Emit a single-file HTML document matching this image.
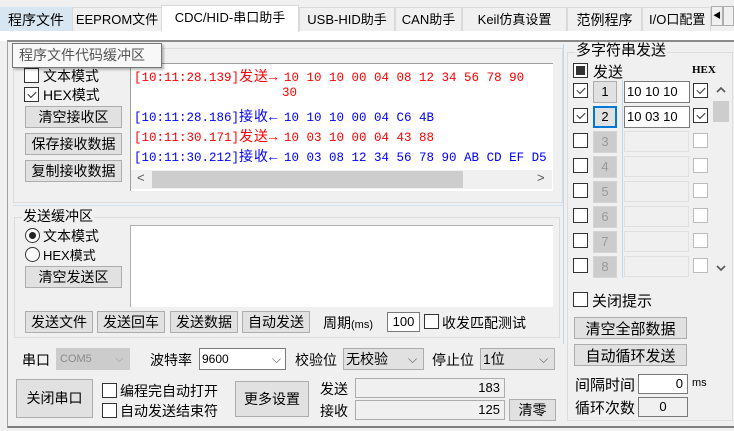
<!DOCTYPE html>
<html><head><meta charset="utf-8">
<style>
*{box-sizing:border-box;margin:0;padding:0}
body{width:734px;height:431px;background:#f0f0f0;font-family:"Liberation Sans","Noto Sans CJK SC",sans-serif;font-size:13px;color:#000;position:relative;overflow:hidden}
.a{position:absolute;white-space:nowrap}
.btn{position:absolute;background:#e1e1e1;border:1px solid #adadad;text-align:center;font-size:14px}
.cb{position:absolute;width:15px;height:15px;border:1px solid #333;background:#fff}
.cbd{position:absolute;width:15px;height:15px;border:1px solid #bcbcbc;background:#fff}
.grp{position:absolute;border:1px solid #dcdcdc}
.lg{position:absolute;background:#f0f0f0;padding:0 1px;font-size:14px;line-height:16px}
.tab{position:absolute;top:7px;height:24px;border:1px solid #d9d9d9;border-bottom:none;background:#f0f0f0;font-size:14px;line-height:24px;text-align:center}
.mono{font-family:"Liberation Mono","Noto Sans CJK SC",monospace;font-size:12.5px}
.cj{display:inline-block;width:45px;font-size:14px;letter-spacing:1px}
.r{color:#f00}.b{color:#00f}
.tb{position:absolute;background:#fff;border:1px solid #7a7a7a}
.chk::after{content:"";position:absolute;left:3px;top:3px;width:7px;height:4px;border-left:1.3px solid #333;border-bottom:1.3px solid #333;transform:rotate(-45deg)}
.nb{position:absolute;width:24px;height:22px;background:#cccccc;border:1px solid #d4d4d4;color:#9a9a9a;text-align:center;line-height:20px;font-size:13px}
.et{position:absolute;width:65px;height:21px;border:1px solid #e0e0e0;background:#f0f0f0}
</style></head><body>
<div style="position:absolute;left:0;top:31px;width:734px;height:10px;background:#fff"></div>
<div class="tab" style="left:0;width:72px;background:#d8e6f2;border-color:#d8e6f2">程序文件</div>
<div class="tab" style="left:72px;width:90px;font-size:13px">EEPROM文件</div>
<div class="tab" style="left:161px;width:138px;top:5px;height:27px;background:#fff;font-size:13px;border-color:#d9d9d9">CDC/HID-串口助手</div>
<div class="tab" style="left:299px;width:96px;font-size:13px">USB-HID助手</div>
<div class="tab" style="left:395px;width:67px;font-size:13px">CAN助手</div>
<div class="tab" style="left:462px;width:105px;font-size:13px">Keil仿真设置</div>
<div class="tab" style="left:567px;width:75px">范例程序</div>
<div class="tab" style="left:642px;width:69px;font-size:13px;text-align:left;padding-left:6px;overflow:hidden">I/O口配置</div>
<div class="a" style="left:711px;top:6px;width:12px;height:20px;background:#f0f0f0;border:1px solid #adadad;font-size:8px;line-height:18px;text-align:center">◀</div>
<div class="a" style="left:723px;top:6px;width:11px;height:20px;background:#f0f0f0;border:1px solid #adadad"></div>
<div class="a" style="left:7px;top:40px;width:727px;height:388px;border-top:2px solid #8a8a8a;border-left:1px solid #a0a0a0;border-bottom:2px solid #808080"></div>
<div class="grp" style="left:13px;top:48px;width:550px;height:155px"></div>
<div class="tb" style="left:130px;top:63px;width:423px;height:128px;border-color:#a0a0a0;border-right:none;border-bottom:none"></div>
<div class="a mono r" style="left:134px;top:66px">[10:11:28.139]<span class="cj">发送→</span>10 10 10 00 04 08 12 34 56 78 90</div>
<div class="a mono r" style="left:282px;top:86px">30</div>
<div class="a mono b" style="left:134px;top:106px">[10:11:28.186]<span class="cj">接收←</span>10 10 10 00 04 C6 4B</div>
<div class="a mono r" style="left:134px;top:126px">[10:11:30.171]<span class="cj">发送→</span>10 03 10 00 04 43 88</div>
<div class="a mono b" style="left:134px;top:146px">[10:11:30.212]<span class="cj">接收←</span>10 03 08 12 34 56 78 90 AB CD EF D5</div>
<div class="a" style="left:131px;top:170px;width:421px;height:19px;background:#f0f0f0"></div>
<div class="a" style="left:152px;top:171px;width:311px;height:17px;background:#cdcdcd"></div>
<div class="a" style="left:137px;top:170px;font-size:13px;color:#555">&lt;</div>
<div class="a" style="left:537px;top:170px;font-size:13px;color:#555">&gt;</div>
<div class="cb" style="left:24px;top:68px"></div><div class="a" style="left:43px;top:66px;font-size:14px">文本模式</div>
<div class="cb chk" style="left:24px;top:87px"></div><div class="a" style="left:43px;top:85px;font-size:14px">HEX模式</div>
<div class="btn" style="left:25px;top:106px;width:97px;height:22px">清空接收区</div>
<div class="btn" style="left:25px;top:133px;width:97px;height:22px">保存接收数据</div>
<div class="btn" style="left:25px;top:160px;width:97px;height:22px">复制接收数据</div>
<div class="a" style="left:12px;top:43px;width:150px;height:25px;background:#f8f8f8;border:1px solid #767676;box-shadow:2px 2px 2px rgba(0,0,0,.25);font-size:14px;line-height:22px;padding-left:6px;color:#555">程序文件代码缓冲区</div>
<div class="a" style="left:563px;top:44px;width:1px;height:300px;background:#bcd8ee"></div>
<div class="a" style="left:13px;top:205px;width:550px;height:1px;background:#cfe2f0"></div>
<div class="grp" style="left:14px;top:217px;width:546px;height:121px"></div>
<div class="lg" style="left:22px;top:208px">发送缓冲区</div>
<div class="a" style="left:25px;top:228px;width:15px;height:15px;border:1px solid #333;border-radius:50%;background:#fff"></div>
<div class="a" style="left:29px;top:232px;width:7px;height:7px;border-radius:50%;background:#222"></div>
<div class="a" style="left:43px;top:226px;font-size:14px">文本模式</div>
<div class="a" style="left:25px;top:247px;width:15px;height:15px;border:1px solid #333;border-radius:50%;background:#fff"></div>
<div class="a" style="left:43px;top:245px;font-size:13px">HEX模式</div>
<div class="btn" style="left:25px;top:266px;width:97px;height:22px">清空发送区</div>
<div class="tb" style="left:130px;top:225px;width:423px;height:82px;border-color:#b0b0b0;border-right:none;border-bottom:none"></div>
<div class="btn" style="left:25px;top:311px;width:68px;height:22px">发送文件</div>
<div class="btn" style="left:97px;top:311px;width:68px;height:22px">发送回车</div>
<div class="btn" style="left:170px;top:311px;width:68px;height:22px">发送数据</div>
<div class="btn" style="left:242px;top:311px;width:68px;height:22px">自动发送</div>
<div class="a" style="left:323px;top:313px;font-size:14px">周期<span style="font-size:11px">(ms)</span></div>
<div class="tb" style="left:387px;top:312px;width:33px;height:20px;text-align:center;line-height:18px;font-size:13px">100</div>
<div class="cb" style="left:424px;top:314px"></div>
<div class="a" style="left:442px;top:313px;font-size:14px">收发匹配测试</div>
<div class="a" style="left:22px;top:350px;font-size:14px">串口</div>
<div class="a" style="left:56px;top:348px;width:74px;height:22px;background:#ccc;border:1px solid #ccc;color:#8a8a8a;font-size:11px;line-height:20px;padding-left:3px">COM5<span style="position:absolute;left:58px;color:#999">⌵</span></div>
<div class="a" style="left:150px;top:350px;font-size:14px">波特率</div>
<div class="tb" style="left:199px;top:348px;width:87px;height:22px;font-size:12px;line-height:20px;padding-left:2px">9600<span style="position:absolute;left:72px;color:#555">⌵</span></div>
<div class="a" style="left:295px;top:350px;font-size:14px">校验位</div>
<div class="a" style="left:343px;top:348px;width:81px;height:22px;background:#e1e1e1;border:1px solid #adadad;font-size:14px;line-height:20px;padding-left:2px">无校验<span style="position:absolute;left:64px;color:#555;font-size:12px">⌵</span></div>
<div class="a" style="left:432px;top:350px;font-size:14px">停止位</div>
<div class="a" style="left:480px;top:348px;width:75px;height:22px;background:#e1e1e1;border:1px solid #adadad;font-size:14px;line-height:20px;padding-left:2px">1位<span style="position:absolute;left:58px;color:#555;font-size:12px">⌵</span></div>
<div class="btn" style="left:16px;top:379px;width:77px;height:39px;line-height:37px">关闭串口</div>
<div class="cb" style="left:102px;top:383px"></div><div class="a" style="left:120px;top:381px;font-size:14px">编程完自动打开</div>
<div class="cb" style="left:102px;top:403px"></div><div class="a" style="left:120px;top:401px;font-size:14px">自动发送结束符</div>
<div class="btn" style="left:235px;top:381px;width:74px;height:36px;line-height:34px">更多设置</div>
<div class="a" style="left:320px;top:379px;font-size:14px">发送</div>
<div class="a" style="left:355px;top:378px;width:150px;height:20px;border:1px solid #adadad;background:#f0f0f0;text-align:right;padding-right:4px;line-height:18px">183</div>
<div class="a" style="left:320px;top:401px;font-size:14px">接收</div>
<div class="a" style="left:355px;top:400px;width:150px;height:20px;border:1px solid #adadad;background:#f0f0f0;text-align:right;padding-right:4px;line-height:18px">125</div>
<div class="btn" style="left:509px;top:399px;width:47px;height:22px">清零</div>
<div class="grp" style="left:567px;top:52px;width:166px;height:369px"></div>
<div class="lg" style="left:575px;top:43px;font-size:15px">多字符串发送</div>
<div class="cb" style="left:573px;top:63px"></div><div class="a" style="left:576px;top:66px;width:9px;height:9px;background:#333"></div>
<div class="a" style="left:593px;top:61px;font-size:15px">发送</div>
<div class="a" style="left:692px;top:64px;font-size:11px;font-family:'Liberation Serif',serif;font-weight:bold">HEX</div>
<div class="a" style="left:622px;top:80px;width:1px;height:198px;background:#bcd8ee"></div>
<div class="a" style="left:713px;top:80px;width:17px;height:198px;background:#f0f0f0"></div>
<div class="a" style="left:713px;top:101px;width:16px;height:21px;background:#cdcdcd"></div>
<svg class="a" style="left:716px;top:86px" width="10" height="8"><path d="M1 6 L5 2 L9 6" fill="none" stroke="#555" stroke-width="1.6"/></svg>
<svg class="a" style="left:716px;top:264px" width="10" height="8"><path d="M1 2 L5 6 L9 2" fill="none" stroke="#555" stroke-width="1.6"/></svg>

<div class="cb chk" style="left:573px;top:83px"></div>
<div class="nb" style="left:593px;top:81px;background:#e1e1e1;border-color:#adadad;color:#000">1</div>
<div class="tb" style="left:624px;top:81px;width:66px;height:22px;font-size:13px;line-height:20px;padding-left:2px;overflow:hidden">10 10 10</div>
<div class="cb chk" style="left:693px;top:83px"></div>
<div class="cb chk" style="left:573px;top:108px"></div>
<div class="nb" style="left:593px;top:106px;background:#e1e1e1;border:2px solid #0078d7;color:#000;line-height:18px">2</div>
<div class="tb" style="left:624px;top:106px;width:66px;height:22px;font-size:13px;line-height:20px;padding-left:2px;overflow:hidden">10 03 10</div>
<div class="cb chk" style="left:693px;top:108px"></div>
<div class="cb" style="left:573px;top:133px"></div><div class="nb" style="left:593px;top:131px">3</div><div class="et" style="left:624px;top:131px"></div><div class="cbd" style="left:693px;top:133px"></div>
<div class="cb" style="left:573px;top:158px"></div><div class="nb" style="left:593px;top:156px">4</div><div class="et" style="left:624px;top:156px"></div><div class="cbd" style="left:693px;top:158px"></div>
<div class="cb" style="left:573px;top:183px"></div><div class="nb" style="left:593px;top:181px">5</div><div class="et" style="left:624px;top:181px"></div><div class="cbd" style="left:693px;top:183px"></div>
<div class="cb" style="left:573px;top:208px"></div><div class="nb" style="left:593px;top:206px">6</div><div class="et" style="left:624px;top:206px"></div><div class="cbd" style="left:693px;top:208px"></div>
<div class="cb" style="left:573px;top:233px"></div><div class="nb" style="left:593px;top:231px">7</div><div class="et" style="left:624px;top:231px"></div><div class="cbd" style="left:693px;top:233px"></div>
<div class="cb" style="left:573px;top:258px"></div><div class="nb" style="left:593px;top:256px">8</div><div class="et" style="left:624px;top:256px"></div><div class="cbd" style="left:693px;top:258px"></div>
<div class="cb" style="left:573px;top:292px"></div><div class="a" style="left:592px;top:290px;font-size:15px">关闭提示</div>
<div class="btn" style="left:574px;top:317px;width:113px;height:22px;font-size:15px">清空全部数据</div>
<div class="btn" style="left:574px;top:344px;width:113px;height:22px;font-size:15px">自动循环发送</div>
<div class="a" style="left:575px;top:374px;font-size:15px">间隔时间</div>
<div class="tb" style="left:638px;top:374px;width:50px;height:20px;text-align:right;padding-right:4px;line-height:18px">0</div>
<div class="a" style="left:692px;top:377px;font-size:11px">ms</div>
<div class="a" style="left:575px;top:397px;font-size:15px">循环次数</div>
<div class="a" style="left:638px;top:397px;width:50px;height:20px;border:1px solid #7a7a7a;background:#f0f0f0;text-align:center;line-height:18px">0</div>
</body></html>
